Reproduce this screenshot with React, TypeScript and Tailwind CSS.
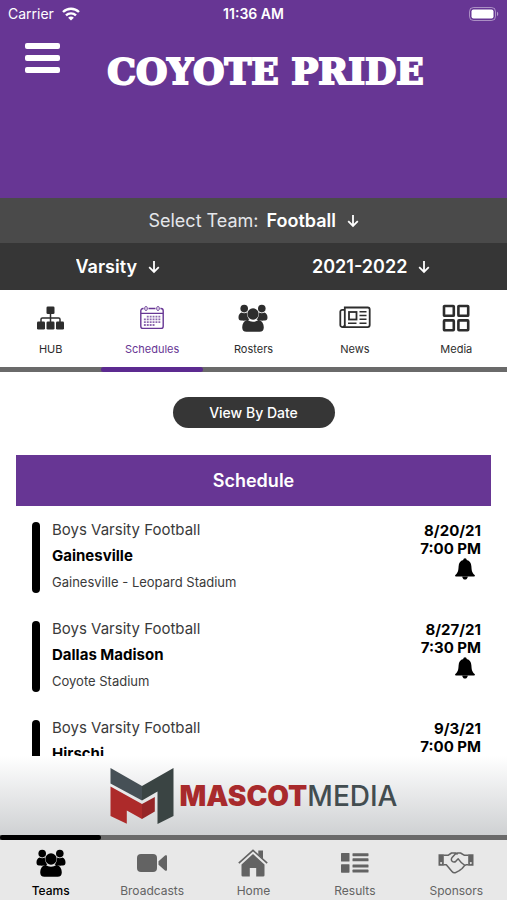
import { useState } from "react";
import type { ReactNode } from "react";

type Tab = { label: string; icon: ReactNode };

type Game = {
  team: string;
  opponent: string;
  place: string;
  date: string;
  time: string;
};

const games: Game[] = [
  {
    team: "Boys Varsity Football",
    opponent: "Gainesville",
    place: "Gainesville - Leopard Stadium",
    date: "8/20/21",
    time: "7:00 PM",
  },
  {
    team: "Boys Varsity Football",
    opponent: "Dallas Madison",
    place: "Coyote Stadium",
    date: "8/27/21",
    time: "7:30 PM",
  },
  {
    team: "Boys Varsity Football",
    opponent: "Hirschi",
    place: "",
    date: "9/3/21",
    time: "7:00 PM",
  },
];

const HubIcon = () => (
  <svg viewBox="0 0 27 24" className="h-6 w-[27px]" fill="currentColor">
    <rect x="9.500" y=".5" width="8" height="7.500" rx="1.300" />
    <rect x="0" y="15.500" width="8" height="8" rx="1.300" />
    <rect x="9.500" y="15.500" width="8" height="8" rx="1.300" />
    <rect x="19" y="15.500" width="8" height="8" rx="1.300" />
    <path
      d="M13.500 7v9M4 16v-2.700c0-.8.600-1.400 1.400-1.400h16.200c.8 0 1.400.6 1.400 1.400V16"
      fill="none"
      stroke="currentColor"
      strokeWidth="1.500"
    />
  </svg>
);

const CalendarIcon = () => (
  <svg
    viewBox="0 0 24 26"
    className="h-[26px] w-6"
    fill="none"
    stroke="currentColor"
    strokeWidth="1.400"
  >
    <path d="M3.600 3.500H3A2.200 2.200 0 0 0 .8 5.700v15.500a2.200 2.200 0 0 0 2.200 2.200h18a2.200 2.200 0 0 0 2.200-2.200V5.700A2.200 2.200 0 0 0 21 3.500h-.6M8.500 3.500h7M1 8.400h22" />
    <rect x="4.800" y="1.600" width="2.400" height="3.800" rx="1" strokeWidth="1" />
    <rect x="16.800" y="1.600" width="2.400" height="3.800" rx="1" strokeWidth="1" />
    <g strokeWidth="1.800" strokeDasharray="1.900 1" strokeOpacity=".75">
      <path d="M6.800 11.600h14M3.900 14.400h17M3.900 17.200h17M3.900 20h11" />
    </g>
  </svg>
);

const PeopleIcon = () => (
  <svg viewBox="0 0 30 28" className="h-7 w-[30px]" fill="currentColor">
    <circle cx="6.200" cy="4.600" r="3.800" />
    <circle cx="23.800" cy="4.600" r="3.800" />
    <path d="M3.600 8.600c1.600 1 3.600 1 5.200 0 .1 3.200 1 5.400 2.600 7-2 .9-4.900 1.300-8.400.9C1.300 16.300.5 15.200.5 13.400c0-2 .9-3.900 3.100-4.800zM26.400 8.600c-1.600 1-3.600 1-5.200 0-.1 3.200-1 5.400-2.600 7 2 .9 4.900 1.300 8.400.9 1.700-.2 2.500-1.300 2.500-3.100 0-2-.9-3.900-3.100-4.800z" />
    <circle cx="15" cy="10" r="5.700" />
    <path d="M9.400 15.700c3.300 2.600 7.900 2.600 11.200 0 3.300 1 5.200 3.900 5.200 7.500 0 3-1.500 4.600-4.200 4.600H8.400c-2.700 0-4.200-1.600-4.200-4.600 0-3.600 1.900-6.500 5.200-7.500z" />
  </svg>
);

const NewsIcon = () => (
  <svg
    viewBox="0 0 32 24"
    className="h-6 w-8"
    fill="none"
    stroke="currentColor"
    strokeWidth="1.800"
  >
    <path d="M5.800 1.500h22.900a2 2 0 0 1 2 2v15.600a2 2 0 0 1-2 2H3.600a2.200 2.200 0 0 0 2.200-2.200z" />
    <path d="M5.800 3.800H3.300a2 2 0 0 0-2 2v13.100a2.200 2.200 0 0 0 4.400 0" />
    <rect x="10" y="6" width="7.500" height="7.500" />
    <path d="M20.500 5.800h7M20.500 9.600h7M20.500 13.300h7M9 17.200h8.500M20.500 17.200h7" strokeWidth="1.500" />
  </svg>
);

const GridIcon = () => (
  <svg
    viewBox="0 0 28 28"
    className="h-7 w-7"
    fill="none"
    stroke="currentColor"
    strokeWidth="2.600"
  >
    <rect x="2" y="2" width="9.800" height="9.800" rx=".6" />
    <rect x="16.400" y="2" width="9.800" height="9.800" rx=".6" />
    <rect x="2" y="16.400" width="9.800" height="9.800" rx=".6" />
    <rect x="16.400" y="16.400" width="9.800" height="9.800" rx=".6" />
  </svg>
);

const VideoIcon = () => (
  <svg viewBox="0 0 30 20" className="h-5 w-[30px]" fill="currentColor">
    <rect width="20" height="18" y="1" rx="4" />
    <path d="M21.500 8.200 28 2.600c1-.8 2-.4 2 .8v13.200c0 1.200-1 1.600-2 .8l-6.500-5.600z" />
  </svg>
);

const HomeIcon = () => (
  <svg viewBox="0 0 30 28" className="h-7 w-[30px]" fill="currentColor">
    <path d="M15 5 26.500 15.500v10.700a1.300 1.300 0 0 1-1.300 1.300h-7V19h-6.400v8.500h-7a1.300 1.300 0 0 1-1.300-1.300V15.500z" />
    <path
      d="M.8 14.200 15 1.300l14.200 12.900"
      fill="none"
      stroke="currentColor"
      strokeWidth="1.600"
    />
    <path d="M20.300 1.500h4.700v8.200l-4.700-4.200z" />
  </svg>
);

const ListIcon = () => (
  <svg viewBox="0 0 28 20" className="h-5 w-7" fill="currentColor">
    <rect width="8.500" height="8.500" rx=".6" />
    <rect y="11.200" width="8.500" height="8.500" rx=".6" />
    <rect x="11.500" y=".2" width="16" height="3" rx=".6" />
    <rect x="11.500" y="5.300" width="16" height="3" rx=".6" />
    <rect x="11.500" y="11.500" width="16" height="3" rx=".6" />
    <rect x="11.500" y="16.600" width="16" height="3" rx=".6" />
  </svg>
);

const HandshakeIcon = () => (
  <svg
    viewBox="0 0 36 24"
    className="h-6 w-9"
    fill="none"
    stroke="currentColor"
    strokeWidth="1.500"
    strokeLinecap="round"
    strokeLinejoin="round"
  >
    <path
      d="M.5 3.200h5.300v11.600H.5zM30.200 3.200h5.300v11.600h-5.300zM3.100 11a1 1 0 1 0 .01 0zM32.800 11a1 1 0 1 0 .01 0z"
      fill="currentColor"
      fillRule="evenodd"
      stroke="none"
    />
    <path d="M6 4.300h4L13.500 2h4l1.600 1M30 4.300h-3.500L22.500 2h-2.700c-1.300 0-1.800.5-2.700 1.300l-3 3.200c-1 1.100-1 2.800 0 3.700 1.100 1 2.800 1 3.900-.1l2.200-2.300c2 3 4.200 4.800 6.200 6.200" />
    <path d="M6 13.800h2.300l5.700 6.700c1.200 1.400 2.800 1.500 4 .8l3.300-1.600 2.800-2.200 2.300-2.800 1.600-.9H30" />
  </svg>
);

const BellIcon = () => (
  <svg viewBox="0 0 20 22" className="h-[22px] w-5" fill="currentColor">
    <path d="M10 .3c1 0 1.700.7 1.700 1.700 3 .8 4.500 3 4.700 6.500.2 4.600.9 6.400 3.200 8.400.7.700.4 1.700-.6 1.700H1c-1 0-1.300-1-.6-1.700 2.300-2 3-3.800 3.200-8.400C3.800 5 5.300 2.800 8.300 2 8.300 1 9 .3 10 .3z" />
    <path d="M7.200 18.400h5.600c-.2 2-1.300 3.200-2.800 3.200s-2.600-1.200-2.800-3.200z" />
  </svg>
);

const ArrowDown = () => (
  <svg
    viewBox="0 0 12 14"
    className="pointer-events-none h-[14px] w-3"
    fill="none"
    stroke="currentColor"
    strokeWidth="1.800"
  >
    <path d="M6 1v11M1.200 7.200 6 12l4.800-4.800" />
  </svg>
);

const topTabs: Tab[] = [
  { label: "HUB", icon: <HubIcon /> },
  { label: "Schedules", icon: <CalendarIcon /> },
  { label: "Rosters", icon: <PeopleIcon /> },
  { label: "News", icon: <NewsIcon /> },
  { label: "Media", icon: <GridIcon /> },
];

const bottomTabs: Tab[] = [
  { label: "Teams", icon: <PeopleIcon /> },
  { label: "Broadcasts", icon: <VideoIcon /> },
  { label: "Home", icon: <HomeIcon /> },
  { label: "Results", icon: <ListIcon /> },
  { label: "Sponsors", icon: <HandshakeIcon /> },
];

const StatusBar = () => (
  <div className="grid h-7 grid-cols-3 items-center px-2 text-sm">
    <div className="flex items-center gap-2">
      <span>Carrier</span>
      <svg viewBox="0 0 18 14" className="h-[14px] w-[18px]" fill="none" stroke="white">
        <path d="M1 5c4.500-4.400 11.500-4.400 16 0" strokeWidth="2.400" />
        <path d="M4 8.400c2.800-2.700 7.200-2.700 10 0" strokeWidth="2.400" />
        <path d="M9 13.600 6.100 10.700c1.600-1.500 4.200-1.500 5.800 0z" fill="white" stroke="none" />
      </svg>
    </div>
    <span className="text-center font-semibold">11:36 AM</span>
    <svg viewBox="0 0 30 14" className="h-[14px] w-[30px] justify-self-end">
      <rect x=".5" y=".5" width="26" height="13" rx="4" fill="none" stroke="white" strokeOpacity=".45" />
      <rect x="2.500" y="2.500" width="22" height="9" rx="2" fill="white" />
      <path d="M28 4.800c1.600.6 1.600 3.800 0 4.400z" fill="white" fillOpacity=".5" />
    </svg>
  </div>
);

const Picker = ({ name, value }: { name: string; value: string }) => (
  <div className="flex items-center gap-2.5">
    <select
      aria-label={name}
      className="cursor-pointer appearance-none bg-transparent font-semibold outline-none"
    >
      <option>{value}</option>
    </select>
    <ArrowDown />
  </div>
);

const GameRow = ({ game }: { game: Game }) => (
  <li className="flex h-[99px] items-start px-4">
    <div className="mt-4 ml-4 h-[71px] w-2 shrink-0 rounded-full bg-black" />
    <div className="mt-[11px] ml-3 flex-1 leading-[26px] text-[#3a3a3a]">
      <p className="text-[15px]">{game.team}</p>
      <p className="text-[15px] font-bold text-black">{game.opponent}</p>
      <p className="text-[13px]">{game.place}</p>
    </div>
    <div className="mt-4 mr-2.5 flex flex-col items-end text-[15px] leading-[18px] font-bold text-black">
      <span>{game.date}</span>
      <span>{game.time}</span>
      <button aria-label="Notify me" className="mr-1.5">
        <BellIcon />
      </button>
    </div>
  </li>
);

const SponsorBanner = () => (
  <a
    href="#"
    className="flex h-[79px] shrink-0 items-center justify-center gap-1.5 bg-linear-to-b from-white to-[#cfd1d3]"
  >
    <svg viewBox="0 0 64 58" className="h-[58px] w-16">
      <path d="M.5 1 32 19v14.500L.5 16.500z" fill="#465056" />
      <path d="M32 19 63.500 1v48L47.500 57V24.500L32 33.500z" fill="#3a4443" />
      <path d="M.5 19.500 32 37v15l-15.200-8.500v13.200L.5 49z" fill="#ad2a2a" />
      <path d="M32 37l12.800-7v14.500L32 52z" fill="#962527" />
    </svg>
    <span className="flex text-[28px] leading-none">
      <span className="font-black text-[#a82a2c]">MASCOT</span>
      <span className="font-medium text-[#434d50]">MEDIA</span>
    </span>
  </a>
);

const App = () => {
  const [topTab, setTopTab] = useState("Schedules");
  const [bottomTab, setBottomTab] = useState("Teams");

  return (
    <div className="flex h-screen flex-col overflow-hidden bg-white font-['Inter','Liberation_Sans',sans-serif]">
      <header className="h-[198px] shrink-0 bg-[#673694] text-white">
        <StatusBar />
        <div className="flex items-start pt-[15px] pr-9 pl-[25px]">
          <button aria-label="Menu" className="flex w-[35px] flex-col gap-1.5">
            <span className="h-1.5 w-full rounded-xs bg-white" />
            <span className="h-1.5 w-full rounded-xs bg-white" />
            <span className="h-1.5 w-full rounded-xs bg-white" />
          </button>
          <h1 className="mt-2 flex-1 text-center font-['DejaVu_Serif',serif] text-[36px] leading-10 font-bold whitespace-nowrap [-webkit-text-stroke:2px_white]">
            COYOTE PRIDE
          </h1>
        </div>
      </header>

      <div className="flex h-[45px] shrink-0 items-center justify-center gap-2 bg-[#4a4a4a] text-lg text-white">
        <span className="text-gray-200">Select Team:</span>
        <Picker name="Team" value="Football" />
      </div>
      <div className="grid h-[47px] shrink-0 grid-cols-[235px_1fr] items-center justify-items-center bg-[#363636] text-lg text-white">
        <Picker name="Level" value="Varsity" />
        <Picker name="Season" value="2021-2022" />
      </div>

      <nav className="grid shrink-0 grid-cols-5">
        {topTabs.map((tab) => (
          <button
            key={tab.label}
            onClick={() => setTopTab(tab.label)}
            className={
              tab.label === topTab ? "text-[#673694]" : "text-[#2d2d2d]"
            }
          >
            <span className="flex h-[77px] flex-col items-center gap-1.5 pt-3">
              <span className="flex h-8 items-center">{tab.icon}</span>
              <span className="text-[11px] leading-[18px]">{tab.label}</span>
            </span>
            <span className="block h-[5px] bg-[#6a6a6a]">
              {tab.label === topTab && (
                <span className="block h-full rounded-full bg-[#5c2a90]" />
              )}
            </span>
          </button>
        ))}
      </nav>

      <main className="min-h-0 flex-1 overflow-hidden">
        <div className="flex justify-center pt-[25px] pb-[27px]">
          <button className="h-[31px] w-[162px] rounded-full bg-[#363636] text-sm font-medium text-white">
            View By Date
          </button>
        </div>
        <h2 className="mx-4 bg-[#673694] text-center text-lg leading-[51px] font-semibold text-white">
          Schedule
        </h2>
        <ul>
          {games.map((game) => (
            <GameRow key={game.date} game={game} />
          ))}
        </ul>
      </main>

      <SponsorBanner />

      <nav className="grid shrink-0 grid-cols-5 bg-[#e8e8e8]">
        {bottomTabs.map((tab) => (
          <button
            key={tab.label}
            onClick={() => setBottomTab(tab.label)}
            className={
              tab.label === bottomTab
                ? "font-medium text-black"
                : "text-[#636363]"
            }
          >
            <span className="block h-[5px] bg-[#6a6a6a]">
              {tab.label === bottomTab && (
                <span className="block h-full rounded-full bg-black" />
              )}
            </span>
            <span className="flex h-[60px] flex-col items-center gap-1 pt-2">
              <span className="flex h-8 items-center">{tab.icon}</span>
              <span className="text-xs leading-[18px]">{tab.label}</span>
            </span>
          </button>
        ))}
      </nav>
    </div>
  );
};

export default App;
